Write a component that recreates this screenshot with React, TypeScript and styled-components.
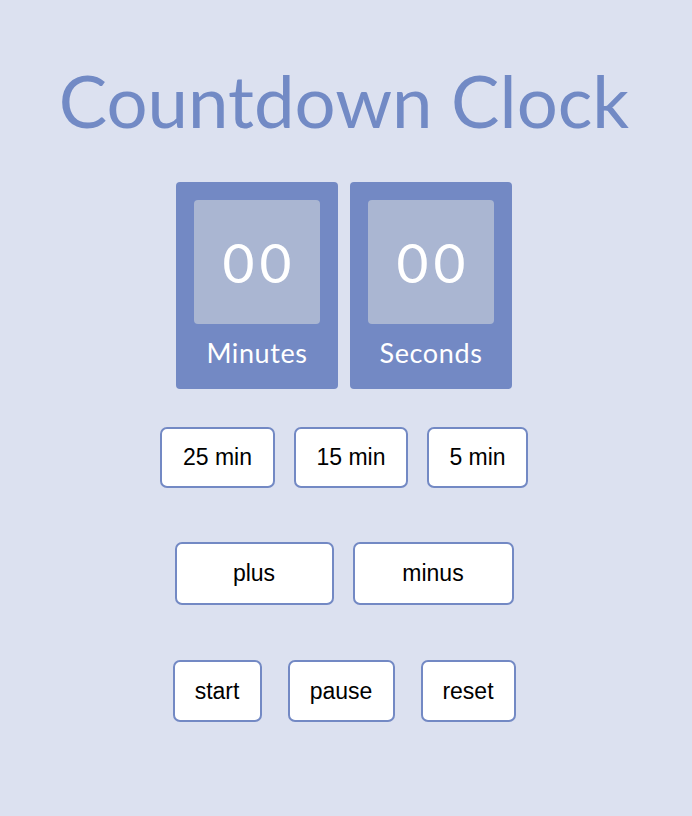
import React from "react";
import styled, { createGlobalStyle } from "styled-components";

const Global = createGlobalStyle`
  html, body { margin: 0; padding: 0; background: #dce1f0; }
  body { font-family: "Liberation Sans", Arial, sans-serif; }
`;

const Page = styled.div`
  display: flex;
  flex-direction: column;
  align-items: center;
  min-height: 816px;
  padding-right: 4px;
  background: #dce1f0;
`;

const Title = styled.h1`
  margin: 58px 0 0 0;
  font-family: "Lato", sans-serif;
  font-weight: 400;
  font-size: 72.5px;
  line-height: 84px;
  color: #728ac5;
`;

const Cards = styled.div`
  display: flex;
  gap: 12px;
  margin-top: 40px;
`;

const Card = styled.div`
  width: 162px;
  height: 207px;
  box-sizing: border-box;
  padding: 18px 18px 0;
  background: #7389c4;
  border-radius: 4px;
  display: flex;
  flex-direction: column;
  align-items: center;
`;

const Digits = styled.div`
  width: 126px;
  height: 124px;
  box-sizing: border-box;
  padding-left: 5px;
  background: #aab6d2;
  border-radius: 4px;
  display: flex;
  align-items: center;
  justify-content: center;
  font-family: "Lato", sans-serif;
  font-size: 55px;
  letter-spacing: 5px;
  color: #ffffff;
`;

const Label = styled.div`
  margin-top: 12px;
  font-family: "Lato", sans-serif;
  font-size: 27px;
  letter-spacing: 0.6px;
  color: #ffffff;
`;

const Row = styled.div<{ $gap: number; $top: number }>`
  display: flex;
  gap: ${(p) => p.$gap}px;
  margin-top: ${(p) => p.$top}px;
`;

const Btn = styled.button<{ $w: number; $h: number }>`
  width: ${(p) => p.$w}px;
  height: ${(p) => p.$h}px;
  box-sizing: border-box;
  background: #ffffff;
  border: 2px solid #7389c4;
  border-radius: 7px;
  font-family: "Liberation Sans", Arial, sans-serif;
  font-size: 23px;
  color: #000;
  padding: 0;
  cursor: pointer;
`;

export default function App() {
  return (
    <>
      <Global />
      <Page>
        <Title>Countdown Clock</Title>
        <Cards>
          <Card>
            <Digits>00</Digits>
            <Label>Minutes</Label>
          </Card>
          <Card>
            <Digits>00</Digits>
            <Label>Seconds</Label>
          </Card>
        </Cards>
        <Row $gap={19} $top={38}>
          <Btn $w={115} $h={61}>25 min</Btn>
          <Btn $w={114} $h={61}>15 min</Btn>
          <Btn $w={101} $h={61}>5 min</Btn>
        </Row>
        <Row $gap={19} $top={54}>
          <Btn $w={159} $h={63}>plus</Btn>
          <Btn $w={161} $h={63}>minus</Btn>
        </Row>
        <Row $gap={26} $top={55}>
          <Btn $w={89} $h={62}>start</Btn>
          <Btn $w={107} $h={62}>pause</Btn>
          <Btn $w={95} $h={62}>reset</Btn>
        </Row>
      </Page>
    </>
  );
}
